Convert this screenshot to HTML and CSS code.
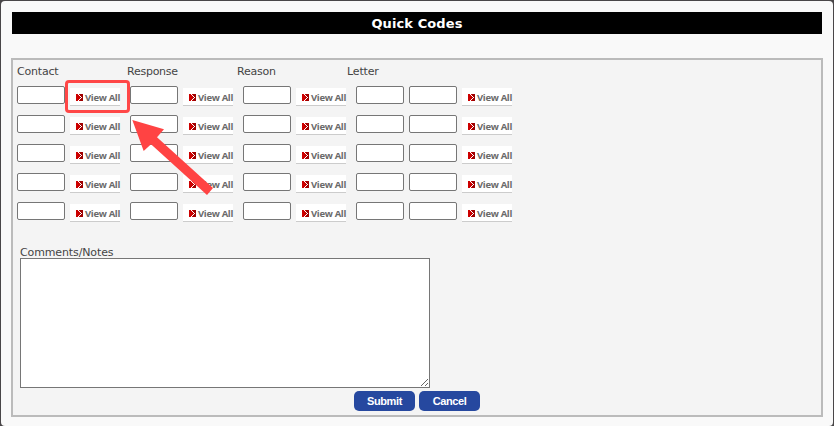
FILE: index.html
```html
<!DOCTYPE html>
<html lang="en">
<head>
<meta charset="utf-8">
<title>Quick Codes</title>
<link rel="stylesheet" href="styles.css">
</head>
<body>
<svg class="defs" width="0" height="0" aria-hidden="true">
  <symbol id="chevron" viewBox="0 0 7 7">
    <path fill="#c00" d="M0 0h4v7H0z"/><path fill="#a00000" d="M4 0h3v7H4z"/>
    <path fill="#fff" d="M2 0h1v1H2zM3 1h1v1H3zM4 2h1v1H4zM5 3h1v1H5zM4 4h1v1H4zM3 5h1v1H3zM2 6h1v1H2z"/>
  </symbol>
</svg>
<main class="dialog">
  <h1 class="title">Quick Codes</h1>
  <form class="panel">
    <div class="labels"><span class="contact">Contact</span><span class="response">Response</span><span class="reason">Reason</span><span class="letter">Letter</span></div>
    <div class="rows" id="rows"></div>
    <label class="notes-label" for="notes">Comments/Notes</label>
    <textarea class="notes" id="notes"></textarea>
    <div class="actions"><button type="button">Submit</button><button type="button">Cancel</button></div>
  </form>
</main>
<div class="highlight"></div>
<svg class="arrow" width="82" height="77" viewBox="132 119 82 77"><path fill="#ff4343" d="M132.3 120L164 129.3 157 137.3 213 188 207 195 151 144.3 143.7 151z"/></svg>
<script src="rows.js"></script>
</body>
</html>
```
FILE: styles.css
```css
* { box-sizing: border-box; }
body {
  margin: 0;
  padding: 1px 1px 0;
  height: 426px;
  overflow: hidden;
  background: #494648;
  font: 11px/14px "DejaVu Sans", sans-serif;
  color: #444;
}
.defs { position: absolute; }
.dialog {
  height: 425px;
  padding: 11px 10px 0;
  border-radius: 4px;
  background: #f9f9f9;
}
.title {
  margin: 0 0 24px 1px;
  width: 810px;
  height: 22px;
  padding-top: 1px;
  background: #000;
  color: #fff;
  font-size: 13px;
  line-height: 22px;
  text-align: center;
  letter-spacing: 0.1px;
}
.panel {
  width: 812px;
  height: 359px;
  padding: 5px 4px 0;
  border: 2px solid #bbb;
  background: #f4f4f4;
}
.labels { display: flex; height: 21px; }
.labels span { width: 110px; }
.contact { letter-spacing: -0.2px; }
.response { letter-spacing: -0.25px; }
.reason { letter-spacing: -0.2px; }
.letter { letter-spacing: -0.15px; }
.rows { display: grid; grid-auto-rows: 18px; row-gap: 11px; }
.row { display: flex; }
.group { display: flex; gap: 5px; margin-right: 10px; }
.code {
  width: 48px;
  height: 18px;
  margin: 0;
  padding: 0 2px;
  border: 1px solid #767676;
  border-radius: 2px;
  background: #fff;
}
.view {
  display: flex;
  align-items: flex-start;
  gap: 2px;
  width: 50px;
  height: 18px;
  margin-top: 2px;
  padding: 3px 0 0 6px;
  border-bottom: 1px solid #ccc;
  background: #fff;
  color: #6a6a6a;
  font: 700 9.5px/13px "Open Sans", sans-serif;
  letter-spacing: -0.33px;
  white-space: nowrap;
}
.view svg { flex: none; width: 7px; height: 7px; margin-top: 3px; }
.notes-label { display: block; margin: 26px 0 0 3px; height: 12px; letter-spacing: -0.12px; }
.notes {
  display: block;
  width: 410px;
  height: 130px;
  margin: 0 0 3px 3px;
  border: 1px solid #767676;
  border-radius: 0;
  background: #fff;
}
.actions { display: flex; gap: 4px; margin-left: 337px; }
.actions button {
  width: 61px;
  height: 20px;
  padding: 0;
  border: 0;
  border-radius: 5px;
  background: #26489f;
  color: #fff;
  font: 700 11px/20px "Liberation Sans", sans-serif;
  letter-spacing: -0.4px;
}
.highlight {
  position: absolute;
  left: 65px;
  top: 80px;
  width: 65px;
  height: 33px;
  border: 3px solid #ff4747;
  border-radius: 4px;
}
.arrow { position: absolute; left: 132px; top: 119px; }
```
FILE: rows.js
```js
const view = '<span class="view"><svg><use href="#chevron"/></svg>View All</span>';
const code = '<input class="code" type="text">';
const group = n => `<div class="group">${code.repeat(n)}${view}</div>`;
document.getElementById('rows').innerHTML =
  Array(5).fill(`<div class="row">${group(1).repeat(3)}${group(2)}</div>`).join('');
```
